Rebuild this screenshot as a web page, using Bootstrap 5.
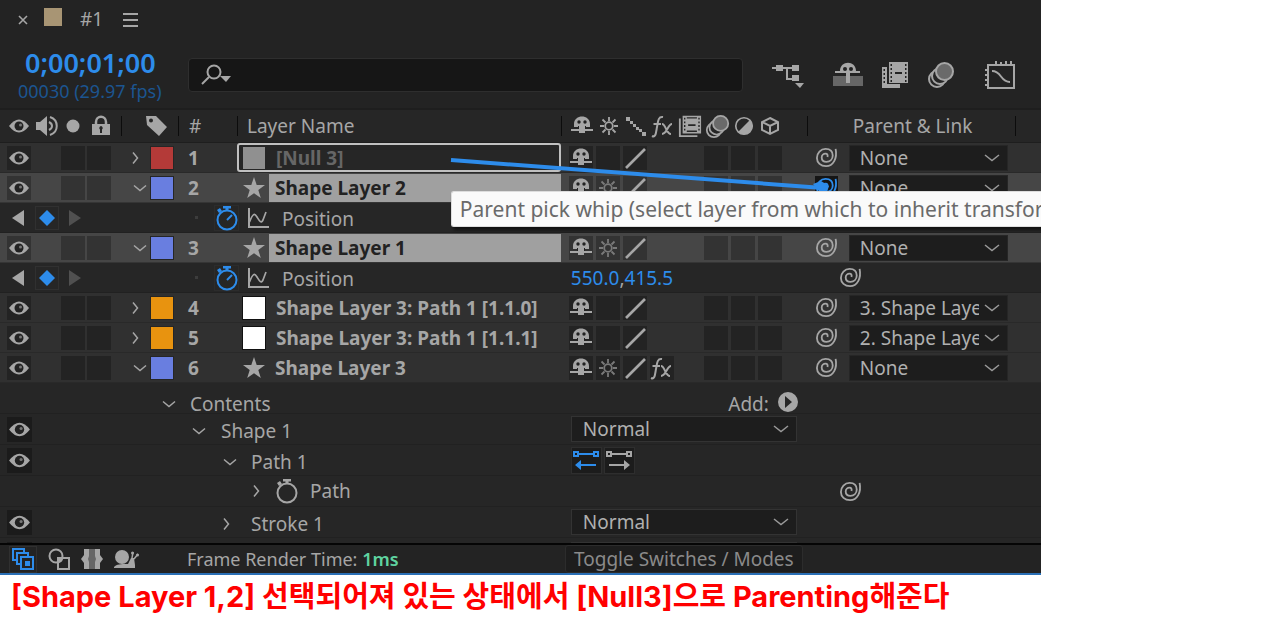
<!DOCTYPE html>
<html lang="ko">
<head>
<meta charset="utf-8">
<meta name="viewport" content="width=device-width, initial-scale=1">
<title>Timeline #1</title>
<link href="https://cdn.jsdelivr.net/npm/bootstrap@5.3.0/dist/css/bootstrap.min.css" rel="stylesheet">
<style>
  body { background: #fff; }
  .timeline { width: 81.7%; min-width: 900px; background: #232323; color: #a6a6a6; font: 19px/24px "Noto Sans", "Open Sans", sans-serif; overflow: hidden; border-bottom: 2px solid #2a6fb5; }
  .timeline svg { display: block; flex: none; fill: currentColor; }
  .timeline button { background: none; border: 0; padding: 0; color: inherit; flex: none; display: flex; align-items: center; justify-content: center; }
  .timeline a { color: inherit; text-decoration: none; }
  .timeline svg.stroked { fill: none; stroke: currentColor; }
  .timeline .lit { color: #2d8ceb; }

  /* Tab strip and toolbar */
  .tabs { height: 38px; padding-left: 16px; }
  .swatch-tab { width: 18px; height: 18px; margin: 0 18px 4px 14px; background: #a89574; }
  .toolbar { height: 70px; padding-top: 3px; }
  .clock { width: 188px; padding-left: 18px; padding-top: 2px; }
  .clock-main { font-size: 27px; line-height: 30px; font-weight: 600; padding-left: 7px; }
  .clock-sub { font-size: 18px; line-height: 26px; color: #1c5590; }
  .search { height: 34px; background: #161616; border: 1px solid #2e2e2e; border-radius: 4px; padding-left: 11px; }
  .search input { background: none; border: 0; outline: 0; color: #ccc; }
  .tools { width: 298px; padding-left: 29px; gap: 18px; }
  .tool-apart { margin-left: 11px; }

  /* Shared row grid */
  .trow { display: grid; grid-template-columns: 121px 57px 59px minmax(0, 1fr) 246px 208px 26px; align-items: center; height: 31px; background: #262626; border-bottom: 1px solid #212121; white-space: nowrap; }
  .trow > * { display: flex; align-items: center; min-width: 0; }
  .trow > .span-name { grid-column: 2 / 5; }
  .trow > .c-switch { grid-column: 5; }
  .trow > .c-parent { grid-column: 6; }
  .head-row { height: 35px; border-top: 2px solid #1e1e1e; border-bottom: 1px solid #1e1e1e; }
  .head-row > * + * { border-left: 1px solid #0c0c0c; height: 20px; }
  .head-name { padding-left: 9px; }
  .head-parent { padding-left: 45px; }
  .layer { height: 30px; background: #303030; border-bottom-color: #292929; }
  .layer.picked { background: #464646; border-bottom-color: #353535; }
  .prop { height: 30px; }

  /* Layer rows */
  .av { padding-left: 7px; }
  .av .cell:nth-child(2) { margin-left: 30px; }
  .av .cell:nth-child(3) { margin-left: 2px; }
  .timeline .cell { width: 24px; height: 24px; background: #232323; }
  .timeline .picked .cell { background: #333; }
  .timeline .eye-sub { width: 25px; height: 25px; background: #1b1b1b; }
  .twirl { padding-left: 8px; }
  .num { font-weight: 700; padding-left: 10px; }
  .chip { width: 22px; height: 22px; margin-left: 8px; box-shadow: 0 0 0 1px #262626; }
  .chip-red { background: #b43a38; }
  .chip-blue { background: #697ee0; }
  .chip-orange { background: #e8930f; }
  .title { font-weight: 700; height: 29px; }
  .title-text { height: 28px; line-height: 29px; padding-left: 6px; }
  .picked .title-text { background: #a0a0a0; color: #222; }
  .title.renaming { border: 2px solid #c0c0c0; border-radius: 3px; background: #262626; color: #666; }
  .box-icon { width: 22px; height: 22px; background: #fff; flex: none; box-shadow: 0 0 0 1px #111; margin: 0 5px 0 6px; }
  .renaming .box-icon { background: #909090; margin: 0 5px 0 4px; box-shadow: none; }
  .title svg { margin: 0 4px 0 6px; }
  .switches { padding-left: 8px; gap: 3px; }
  .gap-cell { width: 24px; height: 24px; }
  .parent { padding-left: 8px; gap: 11px; }
  .sun-dim { color: #7a7a7a; }
  .timeline .whip-on { background: #151515; }

  /* Drop-downs */
  .drop { appearance: none; border: 1px solid #262626; border-radius: 0; color: #b0b0b0; height: 26px; padding: 0 28px 0 10px; background: #1d1d1d url("data:image/svg+xml,%3Csvg xmlns='http://www.w3.org/2000/svg' width='16' height='8' fill='none' stroke='%23999' stroke-width='1.5'%3E%3Cpath d='M1 1l7 5.500 7-5.500'/%3E%3C/svg%3E") no-repeat right 7px center; }
  .parent .drop { width: 159px; }
  .modes { padding-left: 10px; gap: 2px; }
  .modes .drop { width: 226px; border-color: #333; padding-left: 11px; }

  /* Property rows */
  .watch-row { padding-left: 74px; }
  .dot { width: 3px; height: 3px; background: #3c3c3c; margin-right: 16px; }
  .timeline .watch-box { width: 25px; height: 26px; border: 1px solid #2c2c2c; margin-right: 8px; }
  .timeline .key-box { width: 24px; height: 24px; border: 1px solid #303030; }
  .keys { padding-left: 12px; gap: 10px; }
  .key-next { color: #505050; }
  .prop-name { padding: 2px 0 0 13px; }
  .prop-whip { padding-left: 32px; }
  .step-1 { padding-left: 41px; gap: 14px; }
  .step-2 { padding-left: 71px; gap: 15px; }
  .step-3 { padding-left: 102px; gap: 14px; }
  .step-4 { padding-left: 129px; gap: 11px; }
  .step-stroke { padding-left: 99px; gap: 17px; }
  .add-menu { justify-content: end; padding-right: 8px; gap: 8px; }
  .timeline .path-btn { width: 31px; height: 27px; background: #1c1c1c; border: 1px solid #2e2e2e; }
  .peek { height: 5px; overflow: hidden; border: 0; align-items: start; }

  /* Overlays on the layer list */
  .whip-line { position: absolute; right: 209px; top: 10px; pointer-events: none; }
  .tip { position: absolute; right: 0; top: 48px; width: 590px; height: 36px; background: #fafafa; color: #6a6a6a; border: 1px solid #ddd; border-right: 0; box-shadow: 2px 3px 3px #111; font-size: 21px; line-height: 34px; padding-left: 8px; white-space: nowrap; border-radius: 3px 0 0 3px; }

  /* Footer and caption */
  .foot { height: 30px; border-top: 2px solid #050505; border-bottom: 0; background: #232323; }
  .trow > .foot-left { grid-column: 1 / 5; padding-left: 9px; gap: 11px; font-size: 18px; }
  .timeline .foot-on { width: 28px; height: 27px; border: 1px solid #303030; }
  .render-time { padding-left: 36px; }
  .ms { color: #5fd3a0; font-weight: 600; }
  .timeline .toggle { width: 238px; height: 28px; margin-left: 4px; background: #1d1d1d; border: 1px solid #2c2c2c; border-radius: 3px; color: #8a8a8a; }
  .caption-line { color: #f00; font: 700 29px/36px Inter, "Noto Sans CJK KR", sans-serif; padding: 4px 0 0 11px; }
</style>
</head>
<body>
<svg width="0" height="0" class="position-absolute" aria-hidden="true">
  <symbol id="eye" viewBox="0 0 24 24"><path d="M2 12Q12-1 22 12 12 25 2 12z"/><circle cx="12" cy="12" r="4.500" fill="#222"/><circle cx="13.500" cy="11" r="1.500" fill="#777"/></symbol>
  <symbol id="shy" viewBox="0 0 24 24"><path d="M4 10C4 0 20 0 20 10v3h-5v6H9v-6H4z"/><path d="M1 15h8v2H1zM15 15h8v2h-8z"/><path d="M8 12h1v3H8zM15 12h1v3h-1z" fill="#222"/><circle cx="9" cy="8" r="1.700" fill="#222"/><circle cx="15" cy="8" r="1.700" fill="#222"/></symbol>
  <symbol id="sun" viewBox="0 0 24 24"><g fill="none" stroke="currentColor" stroke-width="1.800"><circle cx="12" cy="12" r="3.800"/><path d="M12 3v4M12 17v4M3 12h4M17 12h4M5.500 5.500l3 3M15.500 15.500l3 3M18.500 5.500l-3 3M8.500 15.500l-3 3"/></g></symbol>
  <symbol id="slash" viewBox="0 0 24 24"><path d="M3 22L22 3" fill="none" stroke="currentColor" stroke-width="2.600"/></symbol>
  <symbol id="dots" viewBox="0 0 24 24"><path d="M2 3h4v4H2zM6 7h3v3H6zM9 10h3v3H9zM12 13h3v3h-3zM15 15h3v3h-3zM18 18h4v4h-4z"/></symbol>
  <symbol id="film" viewBox="0 0 26 26"><path d="M1 5h2v18h18v2H1z"/><path fill-rule="evenodd" d="M5 2h20v19H5zM6.500 4v2H8V4zM6.500 8v2H8V8zM6.500 12v2H8v-2zM6.500 16v2H8v-2zM22 4v2h1.500V4zM22 8v2h1.500V8zM22 12v2h1.500v-2zM22 16v2h1.500v-2zM9.500 3.500V5h11V3.500zM11 11v2h8v-2zM9.500 18v1.500h11V18z"/></symbol>
  <symbol id="blur" viewBox="0 0 28 28"><g fill="#262626" stroke="currentColor" stroke-width="2"><circle cx="10" cy="18" r="8"/><circle cx="13" cy="15" r="8"/><circle cx="17.500" cy="10.500" r="8.500" fill="#6a6a6a"/></g></symbol>
  <symbol id="adjust" viewBox="0 0 24 24"><circle cx="12" cy="12" r="9" fill="none" stroke="currentColor" stroke-width="1.800"/><path d="M18.500 5.500a9 9 0 0 1-13 13z"/></symbol>
  <symbol id="cube" viewBox="0 0 24 24"><path d="M12 4l8 4v8l-8 4-8-4V8zM4 8l8 4 8-4M12 12v8" fill="none" stroke="currentColor" stroke-width="2"/></symbol>
  <symbol id="fx" viewBox="0 0 24 24"><path d="M1 22c4 2 4-4 5-9S7 2 12 3M2.500 10H10M11 10c4 0 4 10 9 10M21 10c-4 0-5 10-10 10" fill="none" stroke="currentColor" stroke-width="2"/></symbol>
  <symbol id="whip" viewBox="0 0 24 24"><path d="M21.500 3C23.500 13 19 21 11.500 21 6 21 2 17.500 2 12.500S6 3 11 3s7.500 3 7.500 7-3 6.500-6.500 6.500-5-2-5-4.500 2-4 4-4 2.500 1.500 2 3.500" fill="none" stroke="currentColor" stroke-width="1.900"/></symbol>
  <symbol id="star" viewBox="0 0 22 22"><path d="M11 0l2.700 8H22l-6.700 5 2.500 8L11 16.200 4.200 21l2.500-8L0 8h8.300z"/></symbol>
  <symbol id="down" viewBox="0 0 14 14"><path d="M1 4.500L7 9.500l6-5" fill="none" stroke="currentColor" stroke-width="1.500"/></symbol>
  <symbol id="right" viewBox="0 0 14 14"><path d="M4 1.500L8.500 7 4 12.500" fill="none" stroke="currentColor" stroke-width="1.500"/></symbol>
  <symbol id="watch" viewBox="0 0 24 26"><circle cx="12" cy="15" r="9.500" fill="none" stroke="currentColor" stroke-width="2"/><path d="M8 1h8v2.500h-2.500V6h-3V3.500H8zM2 5l3-2 2 3-3 2z"/></symbol>
  <symbol id="watch-go" viewBox="0 0 24 26"><use href="#watch"/><path d="M12 15l5-5" stroke="currentColor" stroke-width="2"/></symbol>
  <symbol id="graph" viewBox="0 0 22 22"><path d="M2 1v19h20" fill="none" stroke="currentColor" stroke-width="2"/><path d="M2.500 15C6 6 7.500 6 10 10s4 7 6 3l3-8" fill="none" stroke="currentColor" stroke-width="1.700"/></symbol>
</svg>

<main class="timeline">
  <div class="tabs d-flex align-items-center">
    <button aria-label="Close tab"><svg width="14" height="14" class="stroked" stroke-width="1.600"><path d="M3 4l8 8M11 4l-8 8"/></svg></button>
    <span class="swatch-tab"></span>
    <a href="#">#1</a>
    <button class="ms-3 ps-1" aria-label="Panel menu"><svg width="16" height="16" class="stroked" stroke-width="2"><path d="M0 3h15M0 9h15M0 15h15"/></svg></button>
  </div>

  <div class="toolbar d-flex align-items-center">
    <div class="clock">
      <div class="clock-main lit">0;00;01;00</div>
      <div class="clock-sub">00030 (29.97 fps)</div>
    </div>
    <label class="search d-flex align-items-center flex-fill">
      <svg width="32" height="24" class="stroked" stroke-width="2"><circle cx="14" cy="9" r="6.500"/><path d="M9 14l-7 7"/><path d="M20 13h11l-5 6z" fill="currentColor" stroke="none"/></svg>
      <input type="text" class="flex-fill" aria-label="Search layers">
    </label>
    <div class="tools d-flex align-items-center">
      <button aria-label="Mini-flowchart"><svg width="32" height="28"><path d="M0 6h26v2H0zM14 7h2v10h6v2h-8z"/><path d="M4 4h7v6H4zM20 4h7v6h-7zM20 14h7v6h-7zM23 22h9l-4 5z"/></svg></button>
      <button class="tool-apart" aria-label="Hide shy layers"><svg width="30" height="28"><path d="M0 15h30v10H0z" fill="#666"/><path d="M7 10C7-1 23-1 23 10l4 0v2H17v10h-4V12H2v-2z"/><circle cx="12" cy="8" r="2" fill="#222"/><circle cx="18" cy="8" r="2" fill="#222"/></svg></button>
      <button aria-label="Frame blending"><svg width="28" height="28"><path d="M1 6h5v17h13v4H1zM2.500 8v2H4V8zM2.500 12v2H4v-2zM2.500 16v2H4v-2zM2.500 20v2H4v-2z" fill-rule="evenodd"/><path fill-rule="evenodd" d="M8 1h19v21H8zM9.500 3v2H11V3zM9.500 7v2H11V7zM9.500 11v2H11v-2zM9.500 15v2H11v-2zM9.500 19v2H11v-2zM24 3v2h1.500V3zM24 7v2h1.500V7zM24 11v2h1.500v-2zM24 15v2h1.500v-2zM24 19v2h1.500v-2zM14 11v2h7v-2z"/></svg></button>
      <button aria-label="Motion blur"><svg width="28" height="28"><use href="#blur"/></svg></button>
      <button class="tool-apart" aria-label="Graph editor"><svg width="32" height="30" class="stroked" stroke-width="2"><path d="M4 5h26v23H4z"/><path d="M8 11c10 0 8 11 18 11"/><path d="M12 1v4M17 2v3M22 1v4M27 1v4M1 10h3M1 15h3M1 20h3M1 25h3"/></svg></button>
    </div>
  </div>

  <div class="trow head-row">
    <div class="av gap-1">
      <svg width="24" height="24"><use href="#eye"/></svg>
      <svg width="24" height="24"><path d="M1 8h4l7-6v20l-7-6H1z"/><path d="M14 8c4 2 4 6 0 8M15 3c9 3 9 15 0 18" fill="none" stroke="currentColor" stroke-width="2"/></svg>
      <svg width="22" height="24"><circle cx="10" cy="12" r="6.500"/></svg>
      <svg width="24" height="24"><path fill-rule="evenodd" d="M3 10h18v11H3zM12 12a2 2 0 0 0-1 3.500V19h2v-3.500a2 2 0 0 0-1-3.500z"/><path d="M7 11V8c0-7 10-7 10 0v3" fill="none" stroke="currentColor" stroke-width="2.500"/></svg>
    </div>
    <div class="ps-4"><svg width="24" height="24"><path fill-rule="evenodd" d="M0 2h10l11 11-8 9L1 11zM5 4.500a2 2 0 1 0 0 4 2 2 0 0 0 0-4z"/></svg></div>
    <div class="num fw-normal">#</div>
    <div class="head-name">Layer Name</div>
    <div class="switches">
      <svg width="24" height="24"><use href="#shy"/></svg>
      <svg width="24" height="24"><use href="#sun"/></svg>
      <svg width="24" height="24"><use href="#dots"/></svg>
      <svg width="24" height="24"><use href="#fx"/></svg>
      <svg width="24" height="24"><use href="#film"/></svg>
      <svg width="25" height="25"><use href="#blur"/></svg>
      <svg width="22" height="22"><use href="#adjust"/></svg>
      <svg width="24" height="24"><use href="#cube"/></svg>
    </div>
    <div class="head-parent">Parent &amp; Link</div>
    <div></div>
  </div>

  <div class="position-relative">
    <div class="trow layer">
      <div class="av"><button class="cell" aria-label="Visible"><svg width="24" height="24"><use href="#eye"/></svg></button><button class="cell" aria-label="Solo"></button><button class="cell" aria-label="Lock"></button></div>
      <div class="twirl"><button aria-label="Expand"><svg width="14" height="14"><use href="#right"/></svg></button><span class="chip chip-red"></span></div>
      <div class="num">1</div>
      <div class="title renaming"><span class="box-icon"></span><span class="title-text">[Null 3]</span></div>
      <div class="switches"><button class="cell" aria-label="Shy"><svg width="24" height="24"><use href="#shy"/></svg></button><button class="cell" aria-label="Collapse"></button><button class="cell" aria-label="Quality"><svg width="24" height="24"><use href="#slash"/></svg></button><span class="gap-cell"></span><span class="gap-cell"></span><button class="cell" aria-label="Motion blur"></button><button class="cell" aria-label="Adjustment"></button><button class="cell" aria-label="3D"></button></div>
      <div class="parent"><button aria-label="Parent pick whip"><svg width="23" height="23"><use href="#whip"/></svg></button><select class="drop" aria-label="Parent of layer 1"><option>None</option></select></div>
    </div>

    <div class="trow layer picked">
      <div class="av"><button class="cell" aria-label="Visible"><svg width="24" height="24"><use href="#eye"/></svg></button><button class="cell" aria-label="Solo"></button><button class="cell" aria-label="Lock"></button></div>
      <div class="twirl"><button class="ms-1" aria-label="Collapse"><svg width="14" height="14"><use href="#down"/></svg></button><span class="chip chip-blue ms-1"></span></div>
      <div class="num">2</div>
      <div class="title"><svg width="22" height="22"><use href="#star"/></svg><span class="title-text flex-fill">Shape Layer 2</span></div>
      <div class="switches"><button class="cell" aria-label="Shy"><svg width="24" height="24"><use href="#shy"/></svg></button><button class="cell" aria-label="Collapse"><svg class="sun-dim" width="24" height="24"><use href="#sun"/></svg></button><button class="cell" aria-label="Quality"><svg width="24" height="24"><use href="#slash"/></svg></button><span class="gap-cell"></span><span class="gap-cell"></span><button class="cell" aria-label="Motion blur"></button><button class="cell" aria-label="Adjustment"></button><button class="cell" aria-label="3D"></button></div>
      <div class="parent"><button class="whip-on lit" aria-label="Parent pick whip"><svg width="23" height="23"><use href="#whip"/></svg></button><select class="drop" aria-label="Parent of layer 2"><option>None</option></select></div>
    </div>
    <div class="trow prop">
      <div class="keys"><button aria-label="Previous keyframe"><svg width="13" height="16"><path d="M12 0v16L0 8z"/></svg></button><button class="key-box lit" aria-label="Keyframe"><svg width="18" height="18"><path d="M9 1l8 8-8 8-8-8z"/></svg></button><button aria-label="Next keyframe"><svg class="key-next" width="12" height="16"><path d="M0 0l12 8-12 8z"/></svg></button></div>
      <div class="span-name watch-row"><span class="dot"></span><button class="watch-box lit" aria-label="Stopwatch"><svg width="24" height="26"><use href="#watch-go"/></svg></button><svg width="22" height="22"><use href="#graph"/></svg><span class="prop-name">Position</span></div>
    </div>

    <div class="trow layer picked">
      <div class="av"><button class="cell" aria-label="Visible"><svg width="24" height="24"><use href="#eye"/></svg></button><button class="cell" aria-label="Solo"></button><button class="cell" aria-label="Lock"></button></div>
      <div class="twirl"><button class="ms-1" aria-label="Collapse"><svg width="14" height="14"><use href="#down"/></svg></button><span class="chip chip-blue ms-1"></span></div>
      <div class="num">3</div>
      <div class="title"><svg width="22" height="22"><use href="#star"/></svg><span class="title-text flex-fill">Shape Layer 1</span></div>
      <div class="switches"><button class="cell" aria-label="Shy"><svg width="24" height="24"><use href="#shy"/></svg></button><button class="cell" aria-label="Collapse"><svg class="sun-dim" width="24" height="24"><use href="#sun"/></svg></button><button class="cell" aria-label="Quality"><svg width="24" height="24"><use href="#slash"/></svg></button><span class="gap-cell"></span><span class="gap-cell"></span><button class="cell" aria-label="Motion blur"></button><button class="cell" aria-label="Adjustment"></button><button class="cell" aria-label="3D"></button></div>
      <div class="parent"><button aria-label="Parent pick whip"><svg width="23" height="23"><use href="#whip"/></svg></button><select class="drop" aria-label="Parent of layer 3"><option>None</option></select></div>
    </div>
    <div class="trow prop">
      <div class="keys"><button aria-label="Previous keyframe"><svg width="13" height="16"><path d="M12 0v16L0 8z"/></svg></button><button class="key-box lit" aria-label="Keyframe"><svg width="18" height="18"><path d="M9 1l8 8-8 8-8-8z"/></svg></button><button aria-label="Next keyframe"><svg class="key-next" width="12" height="16"><path d="M0 0l12 8-12 8z"/></svg></button></div>
      <div class="span-name watch-row"><span class="dot"></span><button class="watch-box lit" aria-label="Stopwatch"><svg width="24" height="26"><use href="#watch-go"/></svg></button><svg width="22" height="22"><use href="#graph"/></svg><span class="prop-name">Position</span></div>
      <div class="c-switch modes"><span><a href="#" class="lit">550.0</a>,<a href="#" class="lit">415.5</a></span></div>
      <div class="c-parent prop-whip"><button aria-label="Property pick whip"><svg width="23" height="23"><use href="#whip"/></svg></button></div>
    </div>

    <div class="trow layer">
      <div class="av"><button class="cell" aria-label="Visible"><svg width="24" height="24"><use href="#eye"/></svg></button><button class="cell" aria-label="Solo"></button><button class="cell" aria-label="Lock"></button></div>
      <div class="twirl"><button aria-label="Expand"><svg width="14" height="14"><use href="#right"/></svg></button><span class="chip chip-orange"></span></div>
      <div class="num">4</div>
      <div class="title"><span class="box-icon"></span><span class="title-text">Shape Layer 3: Path 1 [1.1.0]</span></div>
      <div class="switches"><button class="cell" aria-label="Shy"><svg width="24" height="24"><use href="#shy"/></svg></button><button class="cell" aria-label="Collapse"></button><button class="cell" aria-label="Quality"><svg width="24" height="24"><use href="#slash"/></svg></button><span class="gap-cell"></span><span class="gap-cell"></span><button class="cell" aria-label="Motion blur"></button><button class="cell" aria-label="Adjustment"></button><button class="cell" aria-label="3D"></button></div>
      <div class="parent"><button aria-label="Parent pick whip"><svg width="23" height="23"><use href="#whip"/></svg></button><select class="drop" aria-label="Parent of layer 4"><option>3. Shape Layer 1</option></select></div>
    </div>
    <div class="trow layer">
      <div class="av"><button class="cell" aria-label="Visible"><svg width="24" height="24"><use href="#eye"/></svg></button><button class="cell" aria-label="Solo"></button><button class="cell" aria-label="Lock"></button></div>
      <div class="twirl"><button aria-label="Expand"><svg width="14" height="14"><use href="#right"/></svg></button><span class="chip chip-orange"></span></div>
      <div class="num">5</div>
      <div class="title"><span class="box-icon"></span><span class="title-text">Shape Layer 3: Path 1 [1.1.1]</span></div>
      <div class="switches"><button class="cell" aria-label="Shy"><svg width="24" height="24"><use href="#shy"/></svg></button><button class="cell" aria-label="Collapse"></button><button class="cell" aria-label="Quality"><svg width="24" height="24"><use href="#slash"/></svg></button><span class="gap-cell"></span><span class="gap-cell"></span><button class="cell" aria-label="Motion blur"></button><button class="cell" aria-label="Adjustment"></button><button class="cell" aria-label="3D"></button></div>
      <div class="parent"><button aria-label="Parent pick whip"><svg width="23" height="23"><use href="#whip"/></svg></button><select class="drop" aria-label="Parent of layer 5"><option>2. Shape Layer 2</option></select></div>
    </div>
    <div class="trow layer">
      <div class="av"><button class="cell" aria-label="Visible"><svg width="24" height="24"><use href="#eye"/></svg></button><button class="cell" aria-label="Solo"></button><button class="cell" aria-label="Lock"></button></div>
      <div class="twirl"><button class="ms-1" aria-label="Collapse"><svg width="14" height="14"><use href="#down"/></svg></button><span class="chip chip-blue ms-1"></span></div>
      <div class="num">6</div>
      <div class="title"><svg width="22" height="22"><use href="#star"/></svg><span class="title-text">Shape Layer 3</span></div>
      <div class="switches"><button class="cell" aria-label="Shy"><svg width="24" height="24"><use href="#shy"/></svg></button><button class="cell" aria-label="Collapse"><svg class="sun-dim" width="24" height="24"><use href="#sun"/></svg></button><button class="cell" aria-label="Quality"><svg width="24" height="24"><use href="#slash"/></svg></button><button class="cell" aria-label="Effects"><svg width="24" height="24"><use href="#fx"/></svg></button><span class="gap-cell"></span><button class="cell" aria-label="Motion blur"></button><button class="cell" aria-label="Adjustment"></button><button class="cell" aria-label="3D"></button></div>
      <div class="parent"><button aria-label="Parent pick whip"><svg width="23" height="23"><use href="#whip"/></svg></button><select class="drop" aria-label="Parent of layer 6"><option>None</option></select></div>
    </div>

    <div class="trow">
      <div></div>
      <div class="span-name step-1 pt-2"><button aria-label="Collapse"><svg width="14" height="14"><use href="#down"/></svg></button>Contents</div>
      <div class="c-switch add-menu pt-2">Add:<button class="pb-1" aria-label="Add"><svg width="22" height="22"><path fill-rule="evenodd" d="M11 1a10 10 0 1 0 0 20 10 10 0 0 0 0-20zM8 5l7 6-7 6z"/></svg></button></div>
    </div>
    <div class="trow">
      <div class="av"><button class="eye-sub" aria-label="Visible"><svg width="25" height="25"><use href="#eye"/></svg></button></div>
      <div class="span-name step-2 pt-1"><button aria-label="Collapse"><svg width="14" height="14"><use href="#down"/></svg></button>Shape 1</div>
      <div class="c-switch modes"><select class="drop" aria-label="Shape 1 blend mode"><option>Normal</option></select></div>
    </div>
    <div class="trow">
      <div class="av"><button class="eye-sub" aria-label="Visible"><svg width="25" height="25"><use href="#eye"/></svg></button></div>
      <div class="span-name step-3 pt-1"><button aria-label="Collapse"><svg width="14" height="14"><use href="#down"/></svg></button>Path 1</div>
      <div class="c-switch modes"><button class="path-btn lit" aria-label="Reverse path off"><svg width="26" height="22"><path d="M0 2h6v6H0zM2 4v2h2V4zM20 2h6v6h-6zM22 4v2h2V4zM6 4h14v2H6zM2 16l6-5v4h15v2H8v4z" fill-rule="evenodd"/></svg></button><button class="path-btn" aria-label="Reverse path on"><svg width="26" height="22"><path d="M0 2h6v6H0zM2 4v2h2V4zM20 2h6v6h-6zM22 4v2h2V4zM6 4h14v2H6zM24 16l-6-5v4H3v2h15v4z" fill-rule="evenodd"/></svg></button></div>
    </div>
    <div class="trow">
      <div></div>
      <div class="span-name step-4"><button aria-label="Expand"><svg width="14" height="14"><use href="#right"/></svg></button><button aria-label="Stopwatch"><svg width="24" height="26"><use href="#watch"/></svg></button>Path</div>
      <div class="c-parent prop-whip"><button aria-label="Property pick whip"><svg width="23" height="23"><use href="#whip"/></svg></button></div>
    </div>
    <div class="trow">
      <div class="av"><button class="eye-sub" aria-label="Visible"><svg width="25" height="25"><use href="#eye"/></svg></button></div>
      <div class="span-name step-stroke pt-1"><button aria-label="Expand"><svg width="14" height="14"><use href="#right"/></svg></button>Stroke 1</div>
      <div class="c-switch modes"><select class="drop" aria-label="Stroke 1 blend mode"><option>Normal</option></select></div>
    </div>
    <div class="trow peek">
      <div class="av"><span class="eye-sub mt-1"></span></div>
      <div class="c-switch modes"><select class="drop mt-1" aria-label="Fill 1 blend mode"><option></option></select></div>
    </div>

    <svg class="whip-line stroked lit" width="385" height="40" stroke-width="4"><path d="M4 7l372 28"/><path d="M366 31l8-3 8 5-2 6-8-1z" fill="currentColor" stroke="none"/></svg>
    <div class="tip" role="tooltip">Parent pick whip (select layer from which to inherit transfor</div>
  </div>

  <div class="trow foot">
    <div class="foot-left">
      <button class="foot-on lit" aria-label="Layer switches pane"><svg width="24" height="24" class="stroked" stroke-width="2"><path d="M6 13H2V2h11v3M10 17H6V6h11v3"/><path d="M10 10h12v12H10z"/><path d="M15 15h3v3h-3z" fill="currentColor"/></svg></button>
      <button aria-label="Modes pane"><svg width="22" height="22" class="stroked" stroke-width="2"><circle cx="8" cy="8" r="6.500"/><path d="M14 10h7v11H10v-6"/><path d="M9 9h6v1c0 3-2 5-6 5z" fill="currentColor" stroke="none"/></svg></button>
      <button aria-label="In, out and stretch pane"><svg width="22" height="22"><path d="M6 1h10v20H6z" fill="#666"/><path d="M3 1h5v7l-1 3 1 3v7H3v-6l-3-4 3-4zM19 1h-5v7l1 3-1 3v7h5v-6l3-4-3-4z"/></svg></button>
      <button aria-label="Render time pane"><svg width="26" height="22"><circle cx="8" cy="9" r="7"/><path d="M0 19c3-3 6-3 14-3l3-6h3l1 7v3H0z"/><path d="M18 10l1-6M20 11l4-5" stroke="currentColor" stroke-width="1.500"/><circle cx="18.500" cy="5" r="1.500"/><circle cx="23.500" cy="7" r="1.500"/></svg></button>
      <span class="render-time">Frame Render Time: <span class="ms">1ms</span></span>
    </div>
    <div class="c-switch"><button class="toggle">Toggle Switches / Modes</button></div>
  </div>
</main>
<p class="caption-line mb-0">[Shape Layer 1,2] 선택되어져 있는 상태에서 [Null3]으로 Parenting해준다</p>
<script src="https://cdn.jsdelivr.net/npm/bootstrap@5.3.0/dist/js/bootstrap.bundle.min.js"></script>
</body>
</html>
